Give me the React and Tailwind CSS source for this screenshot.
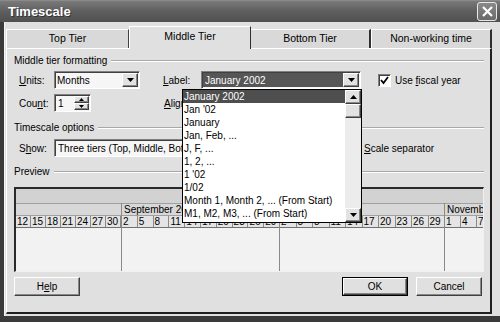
import React from "react";

const raised =
  "border border-t-white border-l-white border-r-[#404040] border-b-[#404040] shadow-[inset_-1px_-1px_0_#888]";
const sunken =
  "border border-t-[#808080] border-l-[#808080] border-r-white border-b-white shadow-[inset_1px_1px_0_#404040]";

function Arrow({ dir = "down" }) {
  return (
    <svg width="7" height="4" viewBox="0 0 7 4">
      {dir === "down" ? (
        <polygon points="0,0 7,0 3.5,4" fill="#000" />
      ) : (
        <polygon points="0,4 7,4 3.5,0" fill="#000" />
      )}
    </svg>
  );
}

function DropBtn() {
  return (
    <div className={`w-[16px] h-full bg-[#e2e2e2] flex items-center justify-center ${raised}`}>
      <Arrow />
    </div>
  );
}

function GroupHeader({ children }) {
  return (
    <div className="flex items-center h-[12px]">
      <span className="pr-[4px] leading-[12px]">{children}</span>
      <div className="flex-1 h-[2px] border-t border-t-[#a8a8a8] border-b border-b-white" />
    </div>
  );
}

function CheckBox({ checked }) {
  return (
    <div className={`w-[13px] h-[13px] bg-white ${sunken} flex items-center justify-center`}>
      {checked && (
        <svg width="9" height="9" viewBox="0 0 9 9">
          <polyline points="1,4 3.5,7 8,1" fill="none" stroke="#000" strokeWidth="1.8" />
        </svg>
      )}
    </div>
  );
}

const listItems = [
  "January 2002",
  "Jan '02",
  "January",
  "Jan, Feb, ...",
  "J, F, ...",
  "1, 2, ...",
  "1 '02",
  "1/02",
  "Month 1, Month 2, ... (From Start)",
  "M1, M2, M3, ... (From Start)",
];

const months = [
  { name: "", w: 105, days: [12, 15, 18, 21, 24, 27, 30], n: 7, border: false },
  { name: "September 2002", w: 158, days: [2, 5, 8, 11, 14, 17, 20, 23, 26, 29], n: 10, border: true },
  { name: "October 2002", w: 165, days: [2, 5, 8, 11, 14, 17, 20, 23, 26, 29], n: 10, border: true },
  { name: "November 2002", w: 120, days: [1, 4, 7, 10, 13, 16, 19], n: 7.5, border: true },
];

export default function App() {
  return (
    <div className="relative w-[500px] h-[322px] overflow-hidden bg-[#3a3a3a] font-['Liberation_Sans',Arial,sans-serif] text-[10px] text-black">
      {/* Title bar */}
      <div className="h-[22px] flex items-center justify-between pl-[8px] pr-[3px] bg-gradient-to-b from-[#7a7a7a] via-[#5e5e5e] to-[#505050] border-t border-t-[#8a8a8a]">
        <span className="text-white font-bold text-[13px] leading-none [text-shadow:1px_1px_0_#333]">Timescale</span>
        <div className="w-[20px] h-[19px] rounded-[3px] border border-[#e8e8e8] bg-gradient-to-b from-[#8a8a8a] to-[#6a6a6a] flex items-center justify-center">
          <svg width="11" height="11" viewBox="0 0 11 11">
            <path d="M1 1 L10 10 M10 1 L1 10" stroke="#fff" strokeWidth="2.2" />
          </svg>
        </div>
      </div>

      {/* Body */}
      <div className="ml-[4px] h-[294px] bg-[#e0e0e0] pl-[1px] border-l border-l-[#f4f4f4]">
        {/* Tabs */}
        <div className="h-[26px] flex items-end text-[10.5px]">
          <div className="w-[123px] h-[19px] bg-[#d9d9d9] border-t border-l border-t-white border-l-white border-r border-r-[#404040] flex items-center justify-center">
            Top Tier
          </div>
          <div className="relative -mb-[1px] w-[122px] h-[23px] bg-[#e0e0e0] border-t border-l border-t-white border-l-white border-r border-r-[#303030] flex items-center justify-center pb-[2px]">
            Middle Tier
          </div>
          <div className="w-[120px] h-[19px] bg-[#d9d9d9] border-t border-t-white border-r-2 border-r-[#303030] flex items-center justify-center">
            Bottom Tier
          </div>
          <div className="w-[121px] h-[19px] bg-[#d9d9d9] border-t border-l border-t-white border-l-white border-r-2 border-r-[#303030] flex items-center justify-center">
            Non-working time
          </div>
        </div>

        {/* Panel */}
        <div className="w-[486px] h-[266px] border-t border-l border-t-white border-l-white border-r-2 border-b-2 border-r-[#202020] border-b-[#202020] pl-[7px] pr-[6px] pt-[6px] flex flex-col">
          <GroupHeader>Middle tier formatting</GroupHeader>

          {/* Units row */}
          <div className="mt-[4px] h-[18px] flex items-center">
            <span className="w-[40px] pl-[5px]"><u>U</u>nits:</span>
            <div className={`w-[86px] h-[18px] bg-[#f6f6f6] ${sunken} flex items-center pl-[2px] pr-[1px] py-[1px]`}>
              <span className="flex-1">Months</span>
              <DropBtn />
            </div>
            <span className="w-[38px] ml-[23px]"><u>L</u>abel:</span>
            <div className={`w-[160px] h-[18px] bg-[#f6f6f6] ${sunken} flex items-center p-[1px]`}>
              <div className="flex-1 h-full bg-[#565656] text-white pl-[2px] flex items-center">January 2002</div>
              <DropBtn />
            </div>
            <div className="ml-[17px]"><CheckBox checked /></div>
            <span className="ml-[4px]">Use <u>f</u>iscal year</span>
          </div>

          {/* Count row */}
          <div className="mt-[5px] h-[18px] flex items-center">
            <span className="w-[40px] pl-[5px]">Cou<u>n</u>t:</span>
            <div className={`w-[37px] h-[18px] bg-[#f6f6f6] ${sunken} flex items-center pl-[2px] p-[1px]`}>
              <span className="flex-1 pl-[1px]">1</span>
              <div className="w-[15px] h-full flex flex-col">
                <div className={`flex-1 bg-[#e2e2e2] ${raised} flex items-center justify-center`}><svg width="5" height="3" viewBox="0 0 5 3"><polygon points="0,3 5,3 2.5,0" fill="#000" /></svg></div>
                <div className={`flex-1 bg-[#e2e2e2] ${raised} flex items-center justify-center`}><svg width="5" height="3" viewBox="0 0 5 3"><polygon points="0,0 5,0 2.5,3" fill="#000" /></svg></div>
              </div>
            </div>
            <span className="ml-[73px]"><u>A</u>lignment:</span>
          </div>

          <div className="mt-[10px]">
            <GroupHeader>Timescale options</GroupHeader>
          </div>

          {/* Show row */}
          <div className="mt-[5px] h-[18px] flex items-center">
            <span className="w-[40px] pl-[5px]">S<u>h</u>ow:</span>
            <div className={`w-[286px] h-[18px] bg-[#f6f6f6] ${sunken} flex items-center pl-[3px] p-[1px]`}>
              <span className="flex-1">Three tiers (Top, Middle, Bottom)</span>
              <DropBtn />
            </div>
            <div className="ml-[8px]"><CheckBox checked /></div>
            <span className="ml-[3px]"><u>S</u>cale separator</span>
          </div>

          <div className="mt-[9px]">
            <GroupHeader>Preview</GroupHeader>
          </div>

          {/* Preview */}
          <div className="mt-[9px] w-[470px] h-[85px] border-t-2 border-l-2 border-t-[#2a2a2a] border-l-[#2a2a2a] border-r border-b border-r-[#f0f0f0] border-b-[#f0f0f0] bg-[#f0f0f0] flex flex-col overflow-hidden">
            <div className="h-[14px] bg-[#d2d2d2] shrink-0" />
            <div className="flex flex-1 overflow-hidden">
              {months.map((m, i) => (
                <div
                  key={i}
                  className={`shrink-0 flex flex-col ${m.border ? "border-l border-l-[#8a8a8a]" : ""}`}
                  style={{ width: m.w }}
                >
                  <div className="h-[12px] bg-[#d8d8d8] border-t border-t-[#a0a0a0] pl-[2px] leading-[11px] whitespace-nowrap overflow-hidden">
                    {m.name}
                  </div>
                  <div className="h-[13px] flex bg-[#e4e4e4] border-t border-t-[#a0a0a0] border-b border-b-[#707070] overflow-hidden">
                    {m.days.map((d, j) => (
                      <div
                        key={j}
                        className="shrink-0 h-full border-r border-r-[#8a8a8a] pl-[1px] leading-[12px] overflow-hidden"
                        style={{ width: m.w / m.n }}
                      >
                        {d}
                      </div>
                    ))}
                  </div>
                  <div className="flex-1 bg-[#f2f2f2]" />
                </div>
              ))}
            </div>
          </div>

          {/* Buttons */}
          <div className="mt-[5px] flex items-center">
            <div className={`w-[66px] h-[19px] bg-[#e0e0e0] ${raised} flex items-center justify-center`}>
              H<u>e</u>lp
            </div>
            <div className="flex-1" />
            <div className="w-[66px] h-[19px] border border-black">
              <div className={`w-full h-full bg-[#e0e0e0] ${raised} flex items-center justify-center`}>OK</div>
            </div>
            <div className={`ml-[8px] mr-[2px] w-[66px] h-[19px] bg-[#e0e0e0] ${raised} flex items-center justify-center`}>
              Cancel
            </div>
          </div>
        </div>
      </div>

      {/* Dropdown list overlay */}
      <div className="absolute left-[182px] top-[89px] w-[180px] h-[134px] bg-white border border-black flex">
        <div className="flex-1 flex flex-col">
          {listItems.map((t, i) => (
            <div
              key={i}
              className={`h-[13px] leading-[13px] pl-[1px] whitespace-nowrap ${i === 0 ? "bg-[#4e4e4e] text-white" : ""}`}
            >
              {t}
            </div>
          ))}
        </div>
        <div className="w-[16px] h-full bg-[#ececec] flex flex-col">
          <div className={`h-[14px] bg-[#e2e2e2] ${raised} flex items-center justify-center`}>
            <Arrow dir="up" />
          </div>
          <div className={`h-[14px] bg-[#e2e2e2] ${raised}`} />
          <div className="flex-1" />
          <div className={`h-[14px] bg-[#e2e2e2] ${raised} flex items-center justify-center`}>
            <Arrow />
          </div>
        </div>
      </div>
    </div>
  );
}
